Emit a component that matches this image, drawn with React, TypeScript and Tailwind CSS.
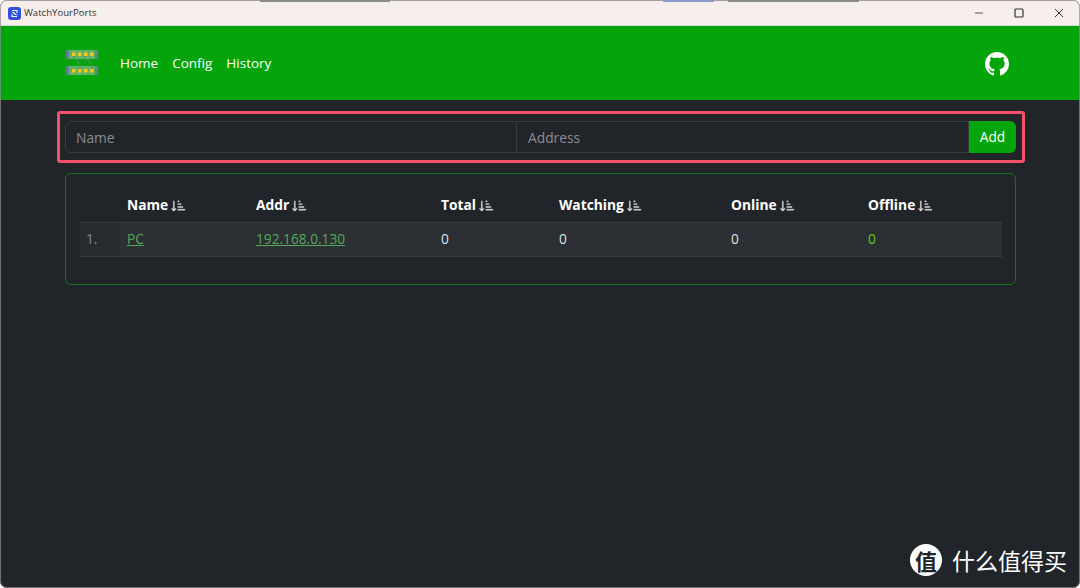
import React from "react";
import { BsSortDownAlt, BsGithub } from "react-icons/bs";

const font = { fontFamily: '"Open Sans", "Noto Sans", sans-serif' };

function Head({ label }: { label: string }) {
  return (
    <th className="h-[35px] pl-[7px] pt-[3px] text-left align-middle font-bold text-[13.8px] text-white">
      <span className="inline-flex items-center gap-[3px]">
        {label}
        <BsSortDownAlt className="w-[15px] h-[15px] text-[#e6e6e6] stroke-current stroke-[0.4px]" />
      </span>
    </th>
  );
}

function Logo() {
  return (
    <svg width="32" height="28" viewBox="0 0 32 28" className="block">
      <rect x="0" y="1" width="32" height="9" rx="1" fill="#5fb36a" />
      <rect x="0" y="1" width="3" height="9" fill="#64808c" />
      <rect x="29" y="1" width="3" height="9" fill="#64808c" />
      <rect x="0" y="17" width="32" height="9" rx="1" fill="#5fb36a" />
      <rect x="0" y="17" width="3" height="9" fill="#64808c" />
      <rect x="29" y="17" width="3" height="9" fill="#64808c" />
      <path d="M8 6v5h4v3h2v6M19 6v5h4v3h3v6" fill="none" stroke="#4e8f5c" strokeWidth="1" />
      {[6, 12, 18, 24].map((x) => (
        <rect key={x} x={x} y="3.5" width="3.5" height="3.5" fill="#f2c81e" />
      ))}
      {[6, 12, 18, 24].map((x) => (
        <rect key={x} x={x} y="20" width="3.5" height="3.5" fill="#f2c81e" />
      ))}
    </svg>
  );
}

export default function App() {
  return (
    <div className="relative w-[1080px] h-[588px] overflow-hidden bg-white" style={font}>
      <div className="h-full rounded-[7px] overflow-hidden bg-[#212529] flex flex-col">
        <div className="h-[26px] shrink-0 bg-[#f7efec] border-t border-[#c8c8c8] border-b border-b-[#d8d8d8] flex items-center pl-[8px]">
          <div className="w-[13px] h-[13px] rounded-[3px] bg-[#2f4fe8] flex items-center justify-center">
            <svg width="9" height="9" viewBox="0 0 9 9"><path d="M2 1.5h5v2.5M7 7.5H2V5M2.5 3l4 3" fill="none" stroke="#fff" strokeWidth="1.1" /></svg>
          </div>
          <span className="ml-[3px] text-[9.6px] text-[#333333]">WatchYourPorts</span>
          <div className="ml-auto flex items-center">
            <svg width="10" height="10" viewBox="0 0 10 10" className="mr-[30px]"><path d="M1 5h8" stroke="#555" strokeWidth="1" /></svg>
            <svg width="10" height="10" viewBox="0 0 10 10" className="mr-[30px]"><rect x="1" y="1" width="8" height="8" rx="1" fill="none" stroke="#333" strokeWidth="1.2" /></svg>
            <svg width="10" height="10" viewBox="0 0 10 10" className="mr-[16px]"><path d="M1 1l8 8M9 1l-8 8" stroke="#333" strokeWidth="1" /></svg>
          </div>
        </div>

        <nav className="h-[74px] shrink-0 bg-[#03a50a] flex items-center pl-[66px] pr-[71px]">
          <Logo />
          <div className="ml-[22px] flex gap-[14px] text-[13.5px] text-white">
            <span>Home</span>
            <span>Config</span>
            <span>History</span>
          </div>
          <BsGithub className="ml-auto mt-px w-[24px] h-[24px] text-white" />
        </nav>

        <main className="pl-[65px] pr-[64px] pt-[21px]">
          <div className="flex h-[32px] text-[13.8px]">
            <input readOnly placeholder="Name" className="w-[452px] h-full bg-[#212529] border border-[#373b3f] rounded-l-[6px] px-[10px] text-[#dee2e6] placeholder:text-[#8a8d90] outline-none" />
            <input readOnly placeholder="Address" className="w-[453px] -ml-px h-full bg-[#212529] border border-[#373b3f] pl-[11px] pr-[10px] text-[#dee2e6] placeholder:text-[#8a8d90] outline-none" />
            <button className="w-[47px] h-full bg-[#03a50a] rounded-r-[6px] text-white">Add</button>
          </div>

          <div className="mt-[20px] h-[112px] border border-[#13741a] rounded-[6px] px-[14px] pt-[13px]">
            <table className="w-[922px] table-fixed border-collapse text-[13.7px] text-[#dee2e6]">
              <colgroup>
                <col className="w-[40px]" />
                <col className="w-[129px]" />
                <col className="w-[185px]" />
                <col className="w-[118px]" />
                <col className="w-[172px]" />
                <col className="w-[137px]" />
                <col className="w-[141px]" />
              </colgroup>
              <thead>
                <tr>
                  <th />
                  <Head label="Name" />
                  <Head label="Addr" />
                  <Head label="Total" />
                  <Head label="Watching" />
                  <Head label="Online" />
                  <Head label="Offline" />
                </tr>
              </thead>
              <tbody>
                <tr className="h-[34px] border-y border-[#373b3f] bg-[#2c3034]">
                  <td className="pl-[6px] bg-[#272b2f] text-[#85898d]">1.</td>
                  <td className="pl-[7px]"><a className="text-[#55a85a] underline">PC</a></td>
                  <td className="pl-[7px]"><a className="text-[#55a85a] underline">192.168.0.130</a></td>
                  <td className="pl-[7px]">0</td>
                  <td className="pl-[7px]">0</td>
                  <td className="pl-[7px]">0</td>
                  <td className="pl-[7px] text-[#5fd10f]">0</td>
                </tr>
              </tbody>
            </table>
          </div>
        </main>
      </div>

      <div className="absolute inset-0 border border-[#8f8f8f]/70 rounded-[7px] pointer-events-none" />
      <div className="absolute left-[260px] top-0 w-[130px] h-[2px] bg-[#8a8a8a]" />
      <div className="absolute left-[663px] top-0 w-[51px] h-[2px] bg-[#8f9bd0]" />
      <div className="absolute left-[728px] top-0 w-[131px] h-[2px] bg-[#8a8a8a]" />

      <div className="absolute left-[57px] top-[111px] w-[968px] h-[52px] border-[3px] border-[#f4526a] rounded-[3px] pointer-events-none" />

      <div className="absolute left-[910px] top-[544px] flex items-center">
        <div className="w-[32px] h-[32px] rounded-full bg-white flex items-center justify-center text-[22px] leading-none text-[#212529] font-bold" style={{ fontFamily: '"Noto Sans CJK SC", sans-serif' }}>值</div>
        <span className="ml-[10px] text-[23px] leading-none text-white" style={{ fontFamily: '"Noto Sans CJK SC", sans-serif' }}>什么值得买</span>
      </div>
    </div>
  );
}
